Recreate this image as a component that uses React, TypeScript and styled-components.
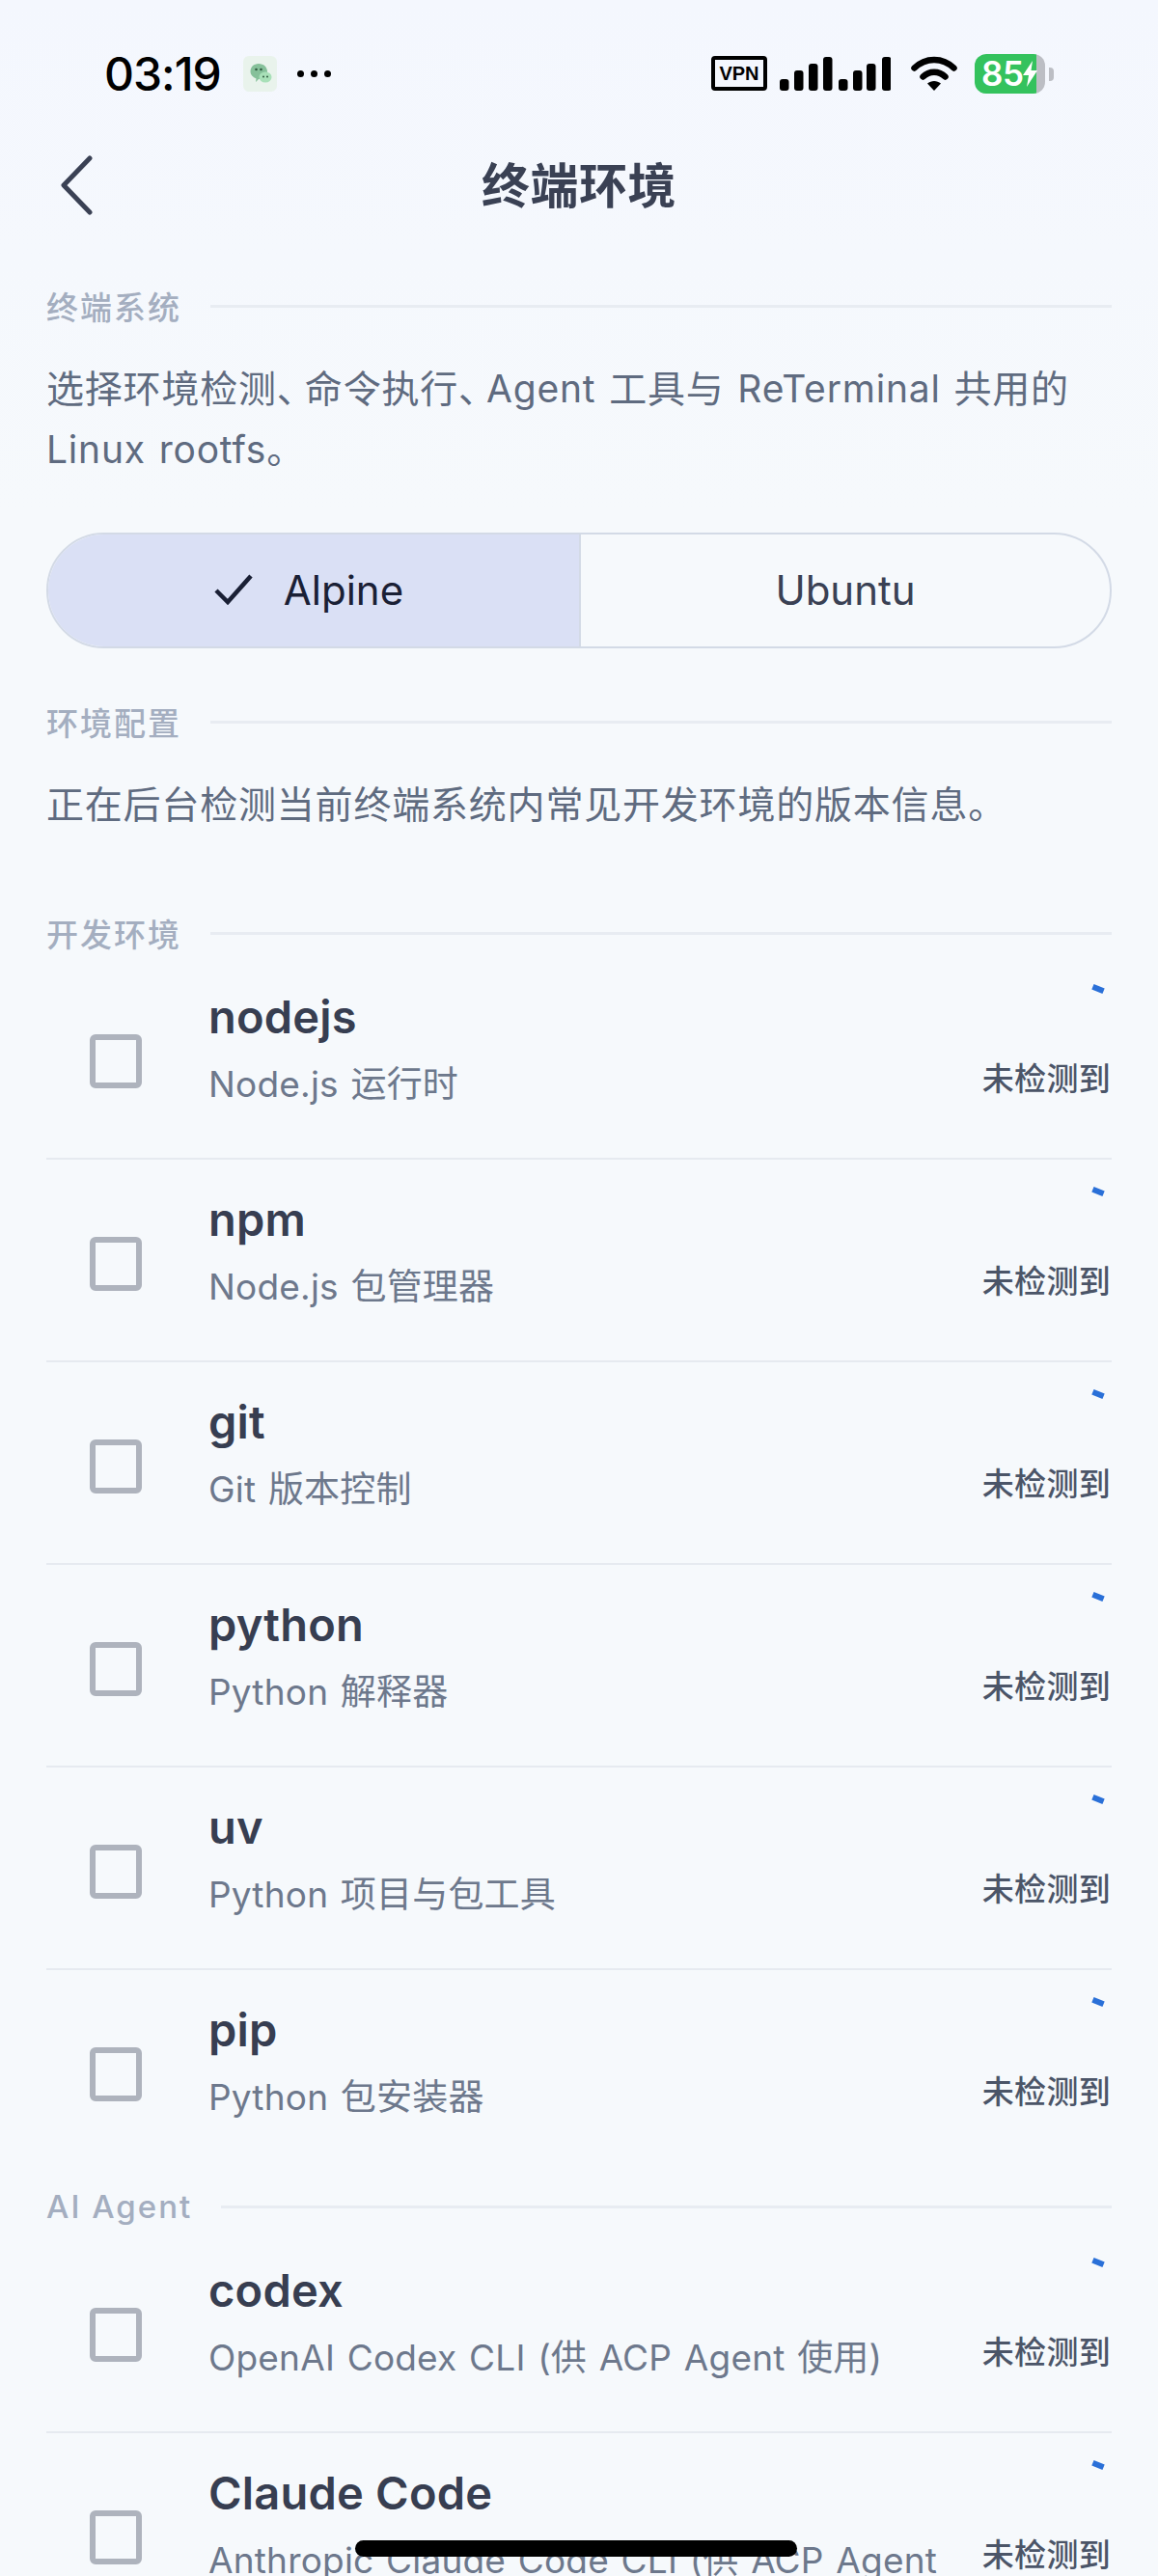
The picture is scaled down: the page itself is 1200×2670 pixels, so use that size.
import styled, { createGlobalStyle } from 'styled-components';

const GlobalStyle = createGlobalStyle`
  html, body {
    margin: 0;
    padding: 0;
    height: 2670px;
    overflow: hidden;
    background: #f6f9fc;
  }
  * { box-sizing: border-box; }
`;

const FONT = `Inter, "Noto Sans CJK SC", sans-serif`;

const Page = styled.div`
  position: relative;
  width: 1200px;
  height: 2670px;
  overflow: hidden;
  background: linear-gradient(180deg, #f4f7fe 0%, #f6f9fc 20%);
  font-family: ${FONT};
`;

const StatusBar = styled.div`
  height: 152px;
  padding: 0 109px 0 108px;
  display: flex;
  align-items: center;
  justify-content: space-between;
`;

const StatusLeft = styled.div`
  display: flex;
  align-items: center;
`;

const Time = styled.span`
  font-family: Inter, sans-serif;
  font-size: 48px;
  font-weight: 500;
  color: #000;
  letter-spacing: -1px;
  width: 144px;
`;

const AppBadge = styled.div`
  width: 35px;
  height: 37px;
  border-radius: 6px;
  background: #e9f3ec;
  display: flex;
  align-items: center;
  justify-content: center;
  margin-right: 21px;
`;

const Dots = styled.div`
  display: flex;
  gap: 7px;
`;

const Dot = styled.i`
  width: 7px;
  height: 7px;
  border-radius: 50%;
  background: #000;
`;

const StatusRight = styled.div`
  display: flex;
  align-items: center;
`;

const VpnBox = styled.div`
  width: 58px;
  height: 36px;
  border: 4px solid #000;
  border-radius: 4px;
  display: flex;
  align-items: center;
  justify-content: center;
  font-family: "Liberation Sans", sans-serif;
  font-size: 20px;
  font-weight: 700;
  color: #000;
  margin-right: 13px;
`;

const SignalWrap = styled.div`
  display: flex;
  margin-right: 21px;
`;

const Battery = styled.div`
  position: relative;
  width: 73px;
  height: 41px;
  margin-left: 18px;
  margin-right: 8px;
  border-radius: 12px;
  overflow: hidden;
  background: linear-gradient(90deg, #34c25d 0 88%, #bcbec4 88%);
  color: #fff;
  font-family: Inter, sans-serif;
  font-size: 35px;
  font-weight: 600;
  line-height: 41px;
  padding-left: 7px;
  letter-spacing: -0.5px;
  display: flex;
  align-items: center;
`;

const BatteryNub = styled.i`
  position: absolute;
  left: 1087px;
  top: 70px;
  width: 5px;
  height: 14px;
  border-radius: 0 4px 4px 0;
  background: #bcbec4;
`;

const NavBar = styled.div`
  height: 80px;
  padding: 0 48px;
  display: grid;
  grid-template-columns: 1fr auto 1fr;
  align-items: center;
`;

const BackButton = styled.div`
  padding-left: 15px;
  display: flex;
`;

const Title = styled.h1`
  margin: 1px 0 0;
  font-size: 50px;
  font-weight: 700;
  letter-spacing: 0.5px;
  color: #3a4154;
  line-height: 1;
`;

const Content = styled.div`
  padding: 0 48px;
`;

const SectionHeader = styled.div<{ $top: number }>`
  margin-top: ${p => p.$top}px;
  height: 40px;
  display: flex;
  align-items: center;
  gap: 30px;
`;

const SectionLabel = styled.span`
  font-size: 33px;
  font-weight: 500;
  letter-spacing: 2px;
  color: #a4aec0;
  white-space: nowrap;
`;

const SectionLine = styled.div`
  flex: 1;
  height: 3px;
  background: #e8ecf2;
`;

const Paragraph = styled.p`
  margin: 34px 0 0;
  font-size: 39px;
  line-height: 63px;
  letter-spacing: 0.8px;
  word-spacing: 2px;
  color: #5f6b80;
`;

const NarrowMark = styled.span`
  letter-spacing: -12px;
  margin-right: 2px;
`;

const Segment = styled.div`
  margin-top: 55px;
  height: 120px;
  display: grid;
  grid-template-columns: 1fr 1fr;
  border: 2px solid #d3dae6;
  border-radius: 60px;
  overflow: hidden;
`;

const SegmentItem = styled.div<{ $active?: boolean }>`
  display: flex;
  align-items: center;
  justify-content: center;
  gap: 32px;
  padding-bottom: 2px;
  padding-right: ${p => (p.$active ? '10px' : '0')};
  font-size: 42px;
  color: ${p => (p.$active ? '#1a2035' : '#3a4154')};
  background: ${p => (p.$active ? '#dae0f5' : 'transparent')};
  border-left: ${p => (p.$active ? 'none' : '2px solid #d3dae6')};
`;

const List = styled.div`
  margin-top: 5px;
`;

const Row = styled.div<{ $last?: boolean }>`
  height: 210px;
  display: grid;
  grid-template-columns: 168px 1fr auto;
  border-bottom: ${p => (p.$last ? 'none' : '2px solid #e6eaf0')};
`;

const CheckBox = styled.div`
  margin: 80px 0 0 45px;
  width: 54px;
  height: 56px;
  border: 6px solid #aeb3bd;
  border-radius: 6px;
`;

const RowText = styled.div`
  padding-top: 35px;
  min-width: 0;
`;

const RowTitle = styled.div`
  font-size: 47px;
  line-height: 54px;
  font-weight: 600;
  letter-spacing: 0.2px;
  color: #373e51;
`;

const RowSub = styled.div`
  margin-top: 18px;
  font-size: 37px;
  line-height: 50px;
  letter-spacing: 0.2px;
  word-spacing: 2px;
  color: #6d788c;
  padding-right: 40px;
`;

const RowStatus = styled.div`
  display: flex;
  flex-direction: column;
  align-items: flex-end;
  padding-top: 30px;
`;

const SpinnerTick = styled.i`
  width: 12px;
  height: 6px;
  margin-right: 8px;
  background: #2a70d8;
  transform: rotate(22deg);
`;

const StatusText = styled.div`
  margin-top: 68px;
  font-size: 33px;
  line-height: 44px;
  font-weight: 500;
  letter-spacing: 0.3px;
  color: #4b5568;
  white-space: nowrap;
  padding-right: 1px;
`;

const HomeIndicator = styled.div`
  position: absolute;
  left: 368px;
  top: 2633px;
  width: 458px;
  height: 17px;
  border-radius: 9px;
  background: #000;
`;

const devTools = [
  { name: 'nodejs', desc: 'Node.js 运行时' },
  { name: 'npm', desc: 'Node.js 包管理器' },
  { name: 'git', desc: 'Git 版本控制' },
  { name: 'python', desc: 'Python 解释器' },
  { name: 'uv', desc: 'Python 项目与包工具' },
  { name: 'pip', desc: 'Python 包安装器' },
];

const agentTools = [
  { name: 'codex', desc: 'OpenAI Codex CLI (供 ACP Agent 使用)' },
  { name: 'Claude Code', desc: 'Anthropic Claude Code CLI (供 ACP Agent 使用)' },
];

function ToolRow({ name, desc, last }: { name: string; desc: string; last?: boolean }) {
  return (
    <Row $last={last}>
      <div>
        <CheckBox />
      </div>
      <RowText>
        <RowTitle>{name}</RowTitle>
        <RowSub>{desc}</RowSub>
      </RowText>
      <RowStatus>
        <SpinnerTick />
        <StatusText>未检测到</StatusText>
      </RowStatus>
    </Row>
  );
}

function ChatIcon() {
  return (
    <svg width="24" height="26" viewBox="0 0 24 26">
      <path d="M10 3c5 0 9 3.6 9 8s-4 8-9 8l-3 3 .5-3.6C4 17 1.5 14.5 1.5 11 1.5 6.6 5 3 10 3z" fill="#86c09a" />
      <ellipse cx="17" cy="17" rx="6.5" ry="5.5" fill="#a8e0b8" />
      <circle cx="7.5" cy="9" r="1.3" fill="#2f5a40" />
      <circle cx="12.5" cy="9" r="1.3" fill="#2f5a40" />
      <circle cx="15" cy="16.5" r="1" fill="#2f5a40" />
      <circle cx="19" cy="16.5" r="1" fill="#2f5a40" />
    </svg>
  );
}

function SignalIcon() {
  const bars = [
    [0, 23], [15, 14], [30, 7], [45, 0],
    [61, 23], [76, 14], [90, 7], [106, 0],
  ];
  return (
    <svg width="115" height="35" viewBox="0 0 115 35">
      {bars.map(([x, y]) => (
        <rect key={x} x={x} y={y} width="9.5" height={35 - y} rx="3" fill="#000" />
      ))}
    </svg>
  );
}

function WifiIcon() {
  return (
    <svg width="48" height="36" viewBox="0 0 48 36" fill="none" stroke="#000" strokeLinecap="round" strokeWidth="6.5">
      <path d="M3.5 12.5C15 1 33 1 44.5 12.5" />
      <path d="M12.5 21.5C19 15 29 15 35.5 21.5" />
      <path d="M24 36l-7-7.500c4-3.500 10-3.500 14 0z" fill="#000" stroke="none" />
    </svg>
  );
}

function BoltIcon() {
  return (
    <svg width="15" height="27" viewBox="0 0 15 27">
      <path d="M10 0L0 15h6l-2 12L15 10H8.5z" fill="#fff" />
    </svg>
  );
}

function App() {
  return (
    <Page>
      <GlobalStyle />
      <StatusBar>
        <StatusLeft>
          <Time>03:19</Time>
          <AppBadge>
            <ChatIcon />
          </AppBadge>
          <Dots>
            <Dot />
            <Dot />
            <Dot />
          </Dots>
        </StatusLeft>
        <StatusRight>
          <VpnBox>VPN</VpnBox>
          <SignalWrap>
            <SignalIcon />
          </SignalWrap>
          <WifiIcon />
          <Battery>
            85
            <BoltIcon />
          </Battery>
        </StatusRight>
      </StatusBar>
      <BatteryNub />
      <NavBar>
        <BackButton>
          <svg width="33" height="62" viewBox="0 0 33 62" fill="none" stroke="#3a4154" strokeWidth="5" strokeLinecap="round" strokeLinejoin="round">
            <path d="M30 3L3 31l27 28" />
          </svg>
        </BackButton>
        <Title>终端环境</Title>
      </NavBar>
      <Content>
        <SectionHeader $top={65}>
          <SectionLabel>终端系统</SectionLabel>
          <SectionLine />
        </SectionHeader>
        <Paragraph>
          选择环境检测<NarrowMark>、</NarrowMark>命令执行<NarrowMark>、</NarrowMark>Agent 工具与 ReTerminal 共用的
          <br />
          Linux rootfs。
        </Paragraph>
        <Segment>
          <SegmentItem $active>
            <svg width="40" height="32" viewBox="0 0 40 32" fill="none" stroke="#1a2035" strokeWidth="4.5">
              <path d="M2 17l12 12L38 2" />
            </svg>
            Alpine
          </SegmentItem>
          <SegmentItem>Ubuntu</SegmentItem>
        </Segment>
        <SectionHeader $top={56}>
          <SectionLabel>环境配置</SectionLabel>
          <SectionLine />
        </SectionHeader>
        <Paragraph>正在后台检测当前终端系统内常见开发环境的版本信息。</Paragraph>
        <SectionHeader $top={82}>
          <SectionLabel>开发环境</SectionLabel>
          <SectionLine />
        </SectionHeader>
        <List>
          {devTools.map((tool, i) => (
            <ToolRow key={tool.name} name={tool.name} desc={tool.desc} last={i === devTools.length - 1} />
          ))}
        </List>
        <SectionHeader $top={15}>
          <SectionLabel>AI Agent</SectionLabel>
          <SectionLine />
        </SectionHeader>
        <List>
          {agentTools.map(tool => (
            <ToolRow key={tool.name} name={tool.name} desc={tool.desc} />
          ))}
        </List>
      </Content>
      <HomeIndicator />
    </Page>
  );
}

export default App;
